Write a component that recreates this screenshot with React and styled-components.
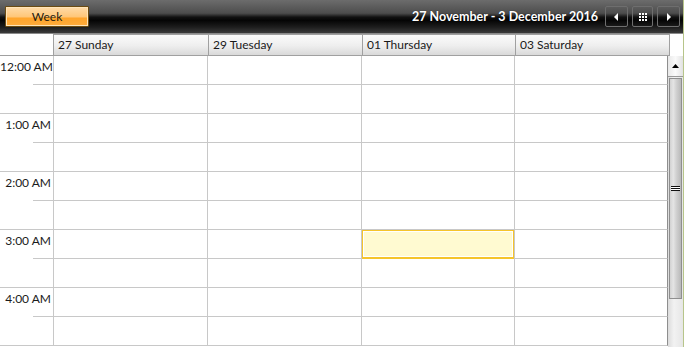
import React from 'react'
import styled, { createGlobalStyle } from 'styled-components';

const GlobalStyle = createGlobalStyle`
  html, body {
    margin: 0;
    padding: 0;
    background: #ffffff;
  }
  body {
    font-family: "Segoe UI", Lato, "Noto Sans", sans-serif;
    font-size: 12px;
  }
`;

const COLUMNS = '154px 154px 153px 153px';

const Scheduler = styled.div`
  width: 684px;
  height: 347px;
  display: flex;
  flex-direction: column;
  overflow: hidden;
  box-sizing: border-box;
  border-right: 1px solid #b7c58a;
`;

const Toolbar = styled.div`
  height: 33px;
  flex: none;
  display: flex;
  align-items: center;
  padding: 0 3px 0 5px;
  background: linear-gradient(#6c6c6c 0%, #4d4d4d 40%, #111 52%, #050505 62%, #1d1d1d 82%, #3a3a3a 100%);
  border-bottom: 1px solid #8a8a8a;
`;

const ViewButton = styled.button`
  width: 84px;
  height: 21px;
  margin-top: -1px;
  padding: 0;
  border: 1px solid #6b4b12;
  border-radius: 1px;
  box-shadow: inset 0 0 0 1px #ffe4b8;
  background: linear-gradient(#ffdba8 0%, #ffc77a 50%, #ffa52c 60%, #ffac3c 100%);
  color: #1e1a10;
  font-family: inherit;
  font-size: 12px;
`;

const Title = styled.div`
  margin-left: auto;
  margin-right: 7px;
  color: #ffffff;
  font-weight: bold;
  font-size: 12.5px;
  text-shadow: 0 0 1px rgba(0, 0, 0, 0.6);
`;

const NavGroup = styled.div`
  display: flex;
  gap: 4px;
`;

const NavButton = styled.button`
  width: ${({ $w }) => $w}px;
  height: 21px;
  padding: 0;
  display: flex;
  align-items: center;
  justify-content: center;
  border: 1px solid #6e6e6e;
  border-radius: 2px;
  background: transparent;
`;

const DayHeaderRow = styled.div`
  height: 22px;
  flex: none;
  display: grid;
  grid-template-columns: 53px 155px 154px 153px 155px 1fr;
`;

const DayHeader = styled.div`
  box-sizing: border-box;
  border: 1px solid #a0a0a0;
  border-right: none;
  background: linear-gradient(#fbfbfb 0%, #eeeeee 55%, #d9d9d9 100%);
  color: #1a1a1a;
  padding: 2px 0 0 4px;
  line-height: 16px;
  white-space: nowrap;
  &:nth-child(5) {
    border-right: 1px solid #a0a0a0;
  }
`;

const Blank = styled.div`
  border-bottom: 1px solid #a0a0a0;
  &:last-child {
    border-bottom: none;
  }
`;

const Body = styled.div`
  flex: 1;
  display: flex;
  min-height: 0;
`;

const Grid = styled.div`
  display: grid;
  grid-template-columns: 54px ${COLUMNS};
  grid-auto-rows: 29px;
  align-content: start;
`;

const TimeCell = styled.div`
  box-sizing: border-box;
  position: relative;
  border-right: 1px solid #c8c8c8;
  text-align: right;
  padding: 3px 2px 0 0;
  color: #1b1b1b;
  line-height: 16px;
  white-space: nowrap;
  &::after {
    content: '';
    position: absolute;
    bottom: 0;
    left: ${({ $half }) => ($half ? '33px' : '0')};
    right: 0;
    border-bottom: 1px solid #c8c8c8;
  }
`;

const SlotCell = styled.div`
  box-sizing: border-box;
  border-right: 1px solid ${({ $last }) => ($last ? '#8e8e8e' : '#c8c8c8')};
  border-bottom: 1px solid #c8c8c8;
  background: #ffffff;
`;

const Selected = styled.div`
  box-sizing: border-box;
  border-right: 1px solid #c8c8c8;
  background: #ffffff;
  & > div {
    height: 100%;
    box-sizing: border-box;
    border: 1px solid #f5c42c;
    border-bottom-width: 2px;
    background: #fffad1;
    box-shadow: inset 0 0 0 1px #ffffff;
  }
`;

const Scrollbar = styled.div`
  flex: 1;
  display: flex;
  flex-direction: column;
  box-sizing: border-box;
  background: linear-gradient(90deg, #dcdcdc, #f2f2f2 40%, #e6e6e6);
`;

const ArrowButton = styled.div`
  height: 21px;
  display: flex;
  align-items: center;
  justify-content: center;
  box-sizing: border-box;
  border-bottom: 1px solid #999;
  background: linear-gradient(90deg, #e8e8e8, #fafafa 50%, #e2e2e2);
`;

const Thumb = styled.div`
  height: 221px;
  margin: 1px 1px 0 1px;
  display: flex;
  align-items: center;
  justify-content: center;
  box-sizing: border-box;
  border: 1px solid #8f8f8f;
  background: linear-gradient(90deg, #d2d2d2, #e4e4e4 30%, #cfcfcf 60%, #b9b9b9);
`;

const Grip = styled.div`
  width: 9px;
  height: 5px;
  background: repeating-linear-gradient(#111 0 1px, #fff 1px 2px);
`;

const days = ['27 Sunday', '29 Tuesday', '01 Thursday', '03 Saturday'];
const hours = ['12:00 AM', '1:00 AM', '2:00 AM', '3:00 AM', '4:00 AM'];

const Triangle = ({ dir }) => (
  <svg width="5" height="8" viewBox="0 0 5 8">
    <path d={dir === 'left' ? 'M4 0 L0 4 L4 8 Z' : 'M1 0 L5 4 L1 8 Z'} fill="#ffffff" />
  </svg>
);

const GridIcon = () => (
  <svg width="8" height="8" viewBox="0 0 8 8">
    {[0, 3, 6].map((y) =>
      [0, 3, 6].map((x) => <rect key={`${x}-${y}`} x={x} y={y} width="2" height="2" fill="#ffffff" />)
    )}
  </svg>
);

const App = () => {
  const rows = [];
  hours.forEach((label, h) => {
    [0, 1].forEach((half) => {
      const rowIndex = h * 2 + half;
      rows.push(<TimeCell key={`t${rowIndex}`} $half={!half}>{half ? '' : label}</TimeCell>);
      days.forEach((d, c) => {
        if (rowIndex === 6 && c === 2) {
          rows.push(<Selected key={`s${rowIndex}-${c}`}><div /></Selected>);
        } else {
          rows.push(<SlotCell key={`s${rowIndex}-${c}`} $last={c === 3} />);
        }
      });
    });
  });

  return (
    <>
      <GlobalStyle />
      <Scheduler>
        <Toolbar>
          <ViewButton>Week</ViewButton>
          <Title>27 November - 3 December 2016</Title>
          <NavGroup>
            <NavButton $w={23}><Triangle dir="left" /></NavButton>
            <NavButton $w={21}><GridIcon /></NavButton>
            <NavButton $w={23}><Triangle dir="right" /></NavButton>
          </NavGroup>
        </Toolbar>
        <DayHeaderRow>
          <Blank />
          {days.map((d) => <DayHeader key={d}>{d}</DayHeader>)}
          <Blank />
        </DayHeaderRow>
        <Body>
          <Grid>{rows}</Grid>
          <Scrollbar>
            <ArrowButton>
              <svg width="7" height="4" viewBox="0 0 7 4"><path d="M3.5 0 L7 4 L0 4 Z" fill="#000" /></svg>
            </ArrowButton>
            <Thumb><Grip /></Thumb>
          </Scrollbar>
        </Body>
      </Scheduler>
    </>
  )
}

export default App
